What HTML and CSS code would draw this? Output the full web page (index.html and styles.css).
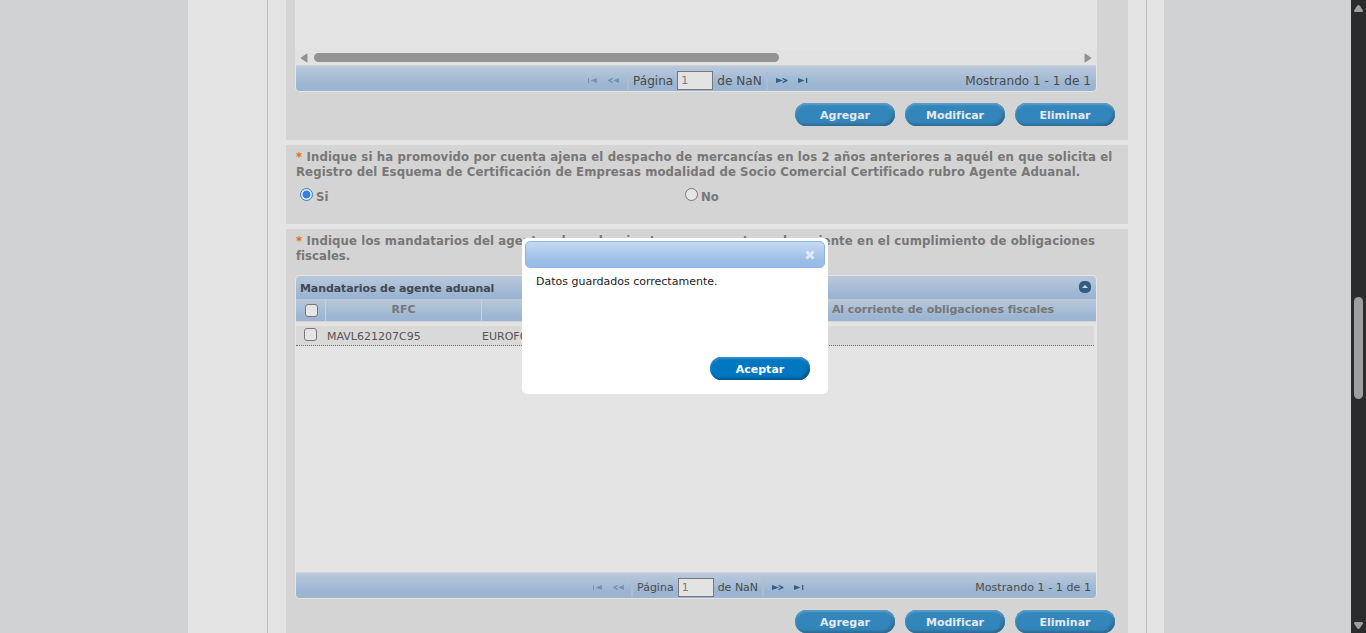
FILE: index.html
```html
<!DOCTYPE html>
<html lang="es">
<head>
<meta charset="utf-8">
<title>Registro del Esquema de Certificación de Empresas</title>
<link rel="stylesheet" href="styles.css">
</head>
<body>
<svg class="defs" width="0" height="0">
  <symbol id="first" viewBox="0 0 10 7"><path d="M0 1h1v5H0zM9 1v5L2.500 3.500z"/></symbol>
  <symbol id="prev" viewBox="0 0 12 7"><path d="M5 .8v1.300L2.400 3.500 5 4.900v1.300L0 4V3zM11 1v5L5 3.500z"/></symbol>
  <symbol id="next" viewBox="0 0 12 7"><path d="M6.500 .8v1.300l2.600 1.400-2.600 1.400v1.300L11.500 4V3zM0 1v5l7-2.500z"/></symbol>
  <symbol id="last" viewBox="0 0 10 7"><path d="M8 1h1.300v5H8zM0 1v5l6.500-2.500z"/></symbol>
</svg>
<div class="page">
  <div class="backdrop">
    <main class="sheet">
      <div class="frame">
        <section class="block block-top">
          <div class="grid grid-top">
            <div class="grid-space"></div>
            <div class="hscroll">
              <svg width="8" height="10"><path d="M7.500 1v8Q7 9.500 6 9L1 5.500Q.3 5 1 4.500L6 1Q7 .5 7.500 1z"/></svg>
              <div class="hthumb"></div>
              <svg width="8" height="10"><path d="M.5 1v8Q1 9.500 2 9l5-3.500Q7.700 5 7 4.500L2 1Q1 .5 .5 1z"/></svg>
            </div>
            <div class="pager pager-big">
              <div class="pager-nav">
                <svg class="off" width="10" height="7"><use href="#first"/></svg>
                <svg class="off" width="12" height="7"><use href="#prev"/></svg>
                <i class="sep"></i><span class="pg">Página</span><span class="num">1</span><span class="of">de NaN</span><i class="sep sep-r"></i>
                <svg width="12" height="7"><use href="#next"/></svg>
                <svg width="10" height="7"><use href="#last"/></svg>
              </div>
              <span class="count">Mostrando 1 - 1 de 1</span>
            </div>
          </div>
          <div class="actions"><button>Agregar</button><button>Modificar</button><button>Eliminar</button></div>
        </section>
        <section class="block block-question">
          <p class="question"><span class="q1"><span class="req">*</span> Indique si ha promovido por cuenta ajena el despacho de mercancías en los 2 años anteriores a aquél en que solicita el</span><br><span class="q2">Registro del Esquema de Certificación de Empresas modalidad de Socio Comercial Certificado rubro Agente Aduanal.</span></p>
          <div class="radios">
            <label><i class="radio on"></i><span>Si</span></label>
            <label><i class="radio"></i><span>No</span></label>
          </div>
        </section>
        <section class="block block-list">
          <p class="question"><span class="q3"><span class="req">*</span> Indique los mandatarios del agente aduanal y si estos se encuentran al corriente en el cumplimiento de obligaciones</span><br><span class="q4">fiscales.</span></p>
          <div class="grid grid-list">
            <div class="caption"><span>Mandatarios de agente aduanal</span>
              <svg width="12" height="12"><rect width="12" height="12" rx="5" fill="#325d82"/><path d="M3 7l3-3 3 3z" fill="#cfdae6"/></svg>
            </div>
            <div class="heads"><div class="cell-check"><i class="check"></i></div><div class="h-rfc">RFC</div><div class="h-name"></div><div class="h-tax">Al corriente de obligaciones fiscales</div></div>
            <div class="row"><i class="check"></i><span class="rfc">MAVL621207C95</span><span class="name">EUROFORO</span></div>
            <div class="grid-space"></div>
            <div class="pager pager-small">
              <div class="pager-nav">
                <svg class="off" width="10" height="7"><use href="#first"/></svg>
                <svg class="off" width="12" height="7"><use href="#prev"/></svg>
                <i class="sep"></i><span class="pg">Página</span><span class="num">1</span><span class="of">de NaN</span><i class="sep sep-r"></i>
                <svg width="12" height="7"><use href="#next"/></svg>
                <svg width="10" height="7"><use href="#last"/></svg>
              </div>
              <span class="count">Mostrando 1 - 1 de 1</span>
            </div>
          </div>
          <div class="actions"><button>Agregar</button><button>Modificar</button><button>Eliminar</button></div>
        </section>
      </div>
    </main>
  </div>
  <aside class="vscroll">
    <svg width="9" height="7"><path d="M3 1Q4.500-.8 6 1l3 4.500Q9 7 8 7H1Q0 7 0 5.500z"/></svg>
    <div class="vthumb"></div>
    <svg width="9" height="7"><path d="M3 6Q4.500 7.800 6 6l3-4.500Q9 0 8 0H1Q0 0 0 1.500z"/></svg>
  </aside>
</div>
<div class="dialog" role="dialog">
  <div class="dialog-bar"><svg width="12" height="12"><path d="M2.500 2.500l7 7M9.500 2.500l-7 7" stroke="#dfe9f6" stroke-width="3"/></svg></div>
  <p class="dialog-text">Datos guardados correctamente.</p>
  <button class="accept">Aceptar</button>
</div>
</body>
</html>
```

FILE: styles.css
```css
* { box-sizing: border-box; }
body { margin: 0; overflow: hidden; font: 13px "DejaVu Sans", sans-serif; color: #777; }
p { margin: 0; }
.defs { display: block; }
.page { display: flex; height: 633px; overflow: hidden; }
.backdrop { flex: 1; background: #d1d2d4; padding-left: 188px; }
.vscroll { width: 15px; flex: none; background: #2b2b2b; fill: #9f9f9f; padding: 5px 0 4px; display: flex; flex-direction: column; align-items: center; }
.vthumb { width: 9px; height: 102px; border-radius: 5px; background: #9f9f9f; margin: 285px 0 auto; }
.sheet { width: 976px; height: 633px; background: #e4e4e4; padding: 0 17px 0 79px; }
.frame { height: 633px; border: solid #bcbcbc; border-width: 0 1px; padding: 0 18px; display: flex; flex-direction: column; gap: 5px; overflow: hidden; }
.block { background: #d4d4d4; flex: none; padding-left: 9px; }
.block-top { height: 140px; }
.block-question { height: 79px; padding-top: 4px; }
.block-list { height: 420px; padding-top: 4px; }
.grid { width: 802px; background: #e4e4e4; display: flex; flex-direction: column; }
.grid-top { height: 92px; border-radius: 0 0 5px 5px; }
.grid-space { flex: 1; }
.hscroll { height: 15px; display: flex; align-items: center; padding: 0 5px; background: #e2e2e2; fill: #939393; }
.hthumb { width: 465px; height: 9px; margin: 0 auto 0 6px; border-radius: 5px; background: #939393; }
.pager { height: 26px; margin: 0 1px 1px; width: 800px; border-top: 1px solid #cfd2d5; border-radius: 0 0 4px 4px; background: linear-gradient(#bac9db, #9bb5d2 75%); color: #4b4b4b; display: flex; align-items: center; justify-content: space-between; padding: 4px 5px 0 292px; fill: #2f5f85; }
.pager-nav { display: flex; align-items: center; }
.pager svg { flex: none; }
.off { opacity: .4; margin-right: 10px; }
.off + .off { margin-right: 7px; }
.sep { width: 2px; height: 18px; background: #aebccc; margin-right: 4px; }
.sep-r { margin: 0 8px 0 4px; }
.sep-r + svg { margin-right: 10px; }
.num { width: 36px; height: 19px; border: 1px solid #777; background: #e3e3e3; margin: 0 4px; padding: 2px 3px; color: #7b7b7b; font-size: 11px; }
.pager-big { font-size: 12.100px; }
.pager-small { font-size: 11px; padding-left: 297px; }
.pager-small .off + .off { margin-right: 6px; }
.pager-small .count { letter-spacing: .07px; }
.actions { display: flex; gap: 10px; justify-content: flex-end; padding: 11px 13px 0 0; }
button { width: 100px; height: 23px; border: 0; border-radius: 12px; padding: 1px 0 0; font: bold 11px "DejaVu Sans", sans-serif; color: #e5e9ec; background: #3386bb; box-shadow: inset 0 2px 2px #5c9ec6, inset -2px -2px 3px #2f688f; }
.question { font: bold 13px/15px "DejaVu Sans Condensed", "DejaVu Sans", sans-serif; font-stretch: condensed; letter-spacing: .14px; white-space: nowrap; height: 30px; padding-left: 1px; }
.q2 { letter-spacing: .105px; }
.q3 { letter-spacing: .13px; }
.q4 { letter-spacing: 0; }
.req { color: #e4672e; }
.radios { display: flex; padding: 8px 0 0 5px; }
.radios label { display: flex; width: 385px; font: bold 13px/18px "DejaVu Sans Condensed", "DejaVu Sans", sans-serif; font-stretch: condensed; }
.radio { width: 13px; height: 13px; border: 1px solid #777; border-radius: 50%; background: #e5e5e5; margin: 1px 3px 0 0; }
.radio.on { border-color: #2f80df; background: radial-gradient(circle, #2f80df 3.500px, #e5e5e5 4.300px); }
.radios span { padding-top: 1px; }
.grid-list { height: 324px; margin-top: 12px; padding-top: 1px; border-radius: 5px; }
.caption { height: 23px; margin: 0 1px; border-radius: 4px 4px 0 0; background: linear-gradient(#bac9db, #9bb5d2 85%); display: flex; align-items: center; justify-content: space-between; padding: 0 5px 1px 4px; font-weight: bold; font-size: 11px; letter-spacing: -.1px; color: #424953; }
.caption span { padding-top: 2px; }
.heads { height: 23px; margin: 0 1px; background: linear-gradient(#bac9db, #9bb5d2 85%); border-bottom: 1px solid #cfd2d5; display: flex; font-weight: bold; font-size: 11px; line-height: 21px; text-align: center; }
.heads > div { border-right: 1px solid #c8d1dc; flex: none; }
.cell-check { width: 30px; padding: 5px 0 0 9px; }
.heads .h-rfc { width: 156px; }
.heads .h-name { width: 307px; }
.heads .h-tax { width: 307px; border: 0; padding-left: 1px; letter-spacing: -.06px; }
.check { display: block; width: 13px; height: 13px; border: 1px solid #777; border-radius: 3px; background: #e5e5e5; flex: none; }
.row { display: flex; height: 20px; width: 798px; margin: 4px 0 0 1px; background: #d9d9d9; border-bottom: 1px dotted #3386bb; color: #555; font-size: 11px; line-height: 21px; padding-left: 8px; }
.row .check { margin: 2px 10px 0 0; }
.rfc { width: 155px; }
.dialog { position: absolute; left: 522px; top: 238px; width: 306px; height: 156px; border-radius: 5px; background: #fff; padding: 3px; display: flex; flex-direction: column; }
.dialog-bar { height: 27px; border: 1px solid #91b5e0; border-radius: 5px; background: linear-gradient(#c5d9f0, #99bce6 80%); display: flex; align-items: center; justify-content: flex-end; padding: 1px 8px 0 0; }
.dialog-text { color: #222; font-size: 11px; margin: 7px 0 0 11px; }
.accept { color: #fff; background: #0078c1; box-shadow: inset 0 2px 2px #338fcb, inset -2px -2px 3px #05568b; margin: auto 15px 11px auto; }
```
